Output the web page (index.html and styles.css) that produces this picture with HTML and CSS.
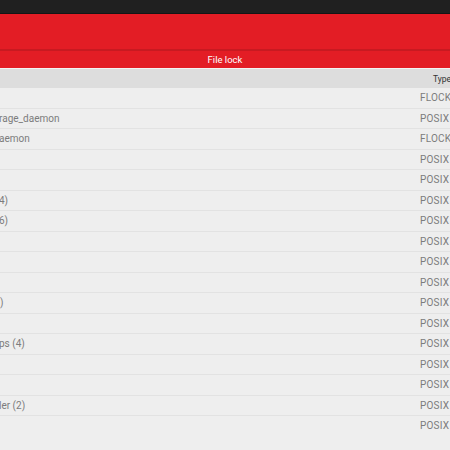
FILE: index.html
```html
<!DOCTYPE html>
<html>
<head>
<meta charset="utf-8">
<link rel="stylesheet" href="styles.css">
</head>
<body>
<div class="app">
  <div class="statusbar"></div>
  <div class="toolbar"></div>
  <div class="tabs"><span class="tab">File lock</span></div>
  <div class="header"><span class="h-type">Type</span></div>
  <div class="list">
    <div class="row"><span class="name"></span><span class="type">FLOCK</span></div>
    <div class="row"><span class="name">rage_daemon</span><span class="type">POSIX</span></div>
    <div class="row"><span class="name">aemon</span><span class="type">FLOCK</span></div>
    <div class="row"><span class="name"></span><span class="type">POSIX</span></div>
    <div class="row"><span class="name"></span><span class="type">POSIX</span></div>
    <div class="row"><span class="name">4)</span><span class="type">POSIX</span></div>
    <div class="row"><span class="name">6)</span><span class="type">POSIX</span></div>
    <div class="row"><span class="name"></span><span class="type">POSIX</span></div>
    <div class="row"><span class="name"></span><span class="type">POSIX</span></div>
    <div class="row"><span class="name"></span><span class="type">POSIX</span></div>
    <div class="row"><span class="name paren">)</span><span class="type">POSIX</span></div>
    <div class="row"><span class="name"></span><span class="type">POSIX</span></div>
    <div class="row"><span class="name">ps (4)</span><span class="type">POSIX</span></div>
    <div class="row"><span class="name"></span><span class="type">POSIX</span></div>
    <div class="row"><span class="name"></span><span class="type">POSIX</span></div>
    <div class="row"><span class="name">ler (2)</span><span class="type">POSIX</span></div>
    <div class="row last"><span class="name"></span><span class="type">POSIX</span></div>
  </div>
</div>
</body>
</html>
```
FILE: styles.css
```css
html, body {
  margin: 0;
  padding: 0;
  width: 450px;
  height: 450px;
  overflow: hidden;
  background: #eeeeee;
  font-family: Roboto, "Liberation Sans", sans-serif;
}
.app {
  display: flex;
  flex-direction: column;
  width: 450px;
}
.statusbar {
  height: 13px;
  background: #202020;
  border-bottom: 1px solid #151515;
}
.toolbar {
  height: 35px;
  background: #e31d25;
  border-bottom: 2px solid #c81a21;
}
.tabs {
  height: 17px;
  background: #e31d25;
  display: flex;
  justify-content: center;
  align-items: center;
  border-bottom: 1px solid #f4f4f4;
}
.tab {
  color: #ffffff;
  font-size: 9.5px;
  line-height: 1;
}
.header {
  height: 19px;
  background: #dddddd;
  display: flex;
  align-items: center;
  justify-content: flex-end;
  overflow: hidden;
}
.h-type {
  font-size: 8.5px;
  color: #333333;
  width: 17px;
  white-space: nowrap;
  overflow: visible;
}
.list {
  display: flex;
  flex-direction: column;
}
.row {
  height: 19.5px;
  border-bottom: 1px solid #e2e2e2;
  display: flex;
  align-items: center;
  justify-content: space-between;
  font-size: 10px;
  color: #7c7c7c;
  overflow: hidden;
  white-space: nowrap;
}
.row.last {
  border-bottom: none;
}
.name {
  text-indent: -1px;
}
.name.paren {
  text-indent: 0;
}
.type {
  width: 30px;
  letter-spacing: 0.2px;
}
```
